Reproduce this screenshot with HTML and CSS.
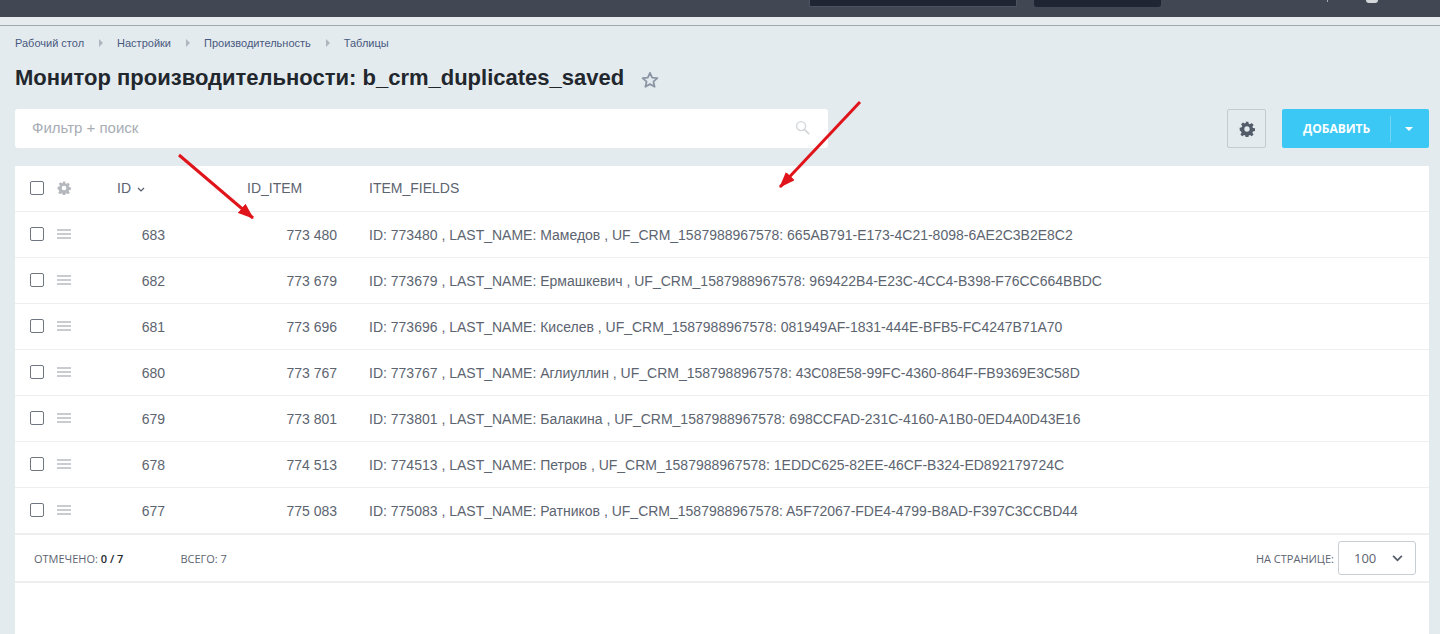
FILE: index.html
```html
<!DOCTYPE html>
<html lang="ru">

<head>
    <meta charset="UTF-8">
    <meta name="viewport" content="width=device-width, initial-scale=1.0">
    <link rel="stylesheet" href="styles.css">
    <title>Монитор производительности</title>
</head>

<body>
    <div class="topbar">
        <div class="topbarBtn topbarBtnWide"></div>
        <div class="topbarBtn topbarBtnNarrow"></div>
        <div class="topbarMark"></div>
        <div class="topbarDot"></div>
    </div>
    <div class="topline"></div>

    <div class="page">
        <div class="breadcrumbs">
            <a>Рабочий стол</a><span class="crumbArrow"></span>
            <a>Настройки</a><span class="crumbArrow"></span>
            <a>Производительность</a><span class="crumbArrow"></span>
            <a>Таблицы</a>
        </div>

        <div class="titleRow">
            <h1>Монитор производительности: b_crm_duplicates_saved</h1>
            <svg class="star" viewBox="0 0 20 20" width="18" height="18">
                <path d="M10 2l2.4 5.3 5.8.6-4.4 3.9 1.3 5.7L10 14.6l-5.1 2.9 1.3-5.7L1.800 7.900l5.800-.6z" fill="none" stroke="#8b95a3" stroke-width="2" stroke-linejoin="round" />
            </svg>
        </div>

        <div class="toolbar">
            <div class="filter">
                <span>Фильтр + поиск</span>
                <svg viewBox="0 0 16 16" width="15" height="15">
                    <circle cx="6.500" cy="6.500" r="4.800" fill="none" stroke="#d3d6da" stroke-width="1.500" />
                    <path d="M10 10l5 5" stroke="#d3d6da" stroke-width="2" />
                </svg>
            </div>
            <div class="gearBtn">
                <svg viewBox="0 0 24 24" width="16" height="16">
                    <path fill="#535c69" fill-rule="evenodd" d="M10 1h4l.6 3.100 1.900.8 2.600-1.800 2.800 2.800-1.800 2.600.8 1.900 3.100.6v4l-3.100.6-.8 1.900 1.800 2.600-2.800 2.800-2.600-1.800-1.900.8-.6 3.100h-4l-.6-3.100-1.900-.8-2.600 1.800-2.800-2.800 1.800-2.600-.8-1.900L1 14v-4l3.100-.6.8-1.900-1.800-2.600 2.800-2.800 2.600 1.800 1.900-.8zM12 8a4 4 0 1 0 0 8 4 4 0 0 0 0-8z" />
                </svg>
            </div>
            <div class="addBtn">
                <span class="addText">ДОБАВИТЬ</span>
                <span class="addArrow"></span>
            </div>
        </div>

        <div class="card">
            <table class="grid">
                <thead>
                    <tr>
                        <th class="colActions">
                            <div class="actions">
                                <span class="check"></span>
                                <svg viewBox="0 0 24 24" width="14" height="14">
                                    <path fill="#b5b9bd" fill-rule="evenodd" d="M10 1h4l.6 3.100 1.900.8 2.600-1.800 2.800 2.800-1.800 2.600.8 1.900 3.100.6v4l-3.100.6-.8 1.900 1.800 2.600-2.800 2.800-2.600-1.800-1.900.8-.6 3.100h-4l-.6-3.100-1.900-.8-2.600 1.800-2.800-2.800 1.800-2.600-.8-1.900L1 14v-4l3.100-.6.8-1.900-1.800-2.600 2.800-2.800 2.600 1.800 1.900-.8zM12 8a4 4 0 1 0 0 8 4 4 0 0 0 0-8z" />
                                </svg>
                            </div>
                        </th>
                        <th class="colId"><span class="thText">ID <svg class="sortMark" viewBox="0 0 8 6" width="8" height="6"><path d="M1 1l3 3 3-3" fill="none" stroke="#535c69" stroke-width="1.200" /></svg></span></th>
                        <th class="colItem"><span class="thText">ID_ITEM</span></th>
                        <th><span class="thText">ITEM_FIELDS</span></th>
                    </tr>
                </thead>
                <tbody id="rows"></tbody>
            </table>

            <div class="footer">
                <span class="marked">ОТМЕЧЕНО: <b>0 / 7</b></span>
                <span class="total">ВСЕГО: 7</span>
                <span class="perPage">НА СТРАНИЦЕ:</span>
                <div class="select">
                    <span>100</span>
                    <svg viewBox="0 0 12 8" width="11" height="7"><path d="M1 1l5 5 5-5" fill="none" stroke="#535c69" stroke-width="2" /></svg>
                </div>
            </div>
        </div>
    </div>

    <!-- red arrows drawn on top of the screenshot -->
    <svg class="arrows" viewBox="0 0 1440 634" width="1440" height="634">
        <defs>
            <marker id="head" markerWidth="16" markerHeight="12" refX="15" refY="6" orient="auto" markerUnits="userSpaceOnUse">
                <path d="M0 0L16 6L0 12z" fill="#e0141b" />
            </marker>
        </defs>
        <path d="M179 155L253 218" stroke="#e0141b" stroke-width="3" marker-end="url(#head)" />
        <path d="M860 102L780 187" stroke="#e0141b" stroke-width="3" marker-end="url(#head)" />
    </svg>

    <script>var rows = [
            ["683", "773 480", "ID: 773480 , LAST_NAME: Мамедов , UF_CRM_1587988967578: 665AB791-E173-4C21-8098-6AE2C3B2E8C2"],
            ["682", "773 679", "ID: 773679 , LAST_NAME: Ермашкевич , UF_CRM_1587988967578: 969422B4-E23C-4CC4-B398-F76CC664BBDC"],
            ["681", "773 696", "ID: 773696 , LAST_NAME: Киселев , UF_CRM_1587988967578: 081949AF-1831-444E-BFB5-FC4247B71A70"],
            ["680", "773 767", "ID: 773767 , LAST_NAME: Аглиуллин , UF_CRM_1587988967578: 43C08E58-99FC-4360-864F-FB9369E3C58D"],
            ["679", "773 801", "ID: 773801 , LAST_NAME: Балакина , UF_CRM_1587988967578: 698CCFAD-231C-4160-A1B0-0ED4A0D43E16"],
            ["678", "774 513", "ID: 774513 , LAST_NAME: Петров , UF_CRM_1587988967578: 1EDDC625-82EE-46CF-B324-ED892179724C"],
            ["677", "775 083", "ID: 775083 , LAST_NAME: Ратников , UF_CRM_1587988967578: A5F72067-FDE4-4799-B8AD-F397C3CCBD44"]
        ];

        document.getElementById("rows").innerHTML = rows.map(item => (
            "<tr><td class='colActions'><div class='actions'><span class='check'></span><span class='drag'></span></div></td>" +
            "<td class='colId'>" + item[0] + "</td>" +
            "<td class='colItem'>" + item[1] + "</td>" +
            "<td>" + item[2] + "</td></tr>"
        )).join('');</script>
</body>

</html>
```

FILE: styles.css
```css
html,
body {
    margin: 0;
    height: 634px;
    overflow: hidden;
}

body {
    position: relative;
    background-color: #e4ebee;
    font-family: "Liberation Sans", Arial, sans-serif;
    color: #5c6470;
}

.topbar {
    display: flex;
    height: 17px;
    background-color: #414854;
    align-items: flex-start;
    padding-left: 809px;
    box-sizing: border-box;
}

.topbarBtn {
    height: 7px;
    background-color: #1f2532;
}

.topbarBtnWide {
    width: 208px;
    border: 1px solid #4c5360;
    border-top: 0;
    box-sizing: border-box;
}

.topbarBtnNarrow {
    width: 127px;
    margin-left: 17px;
    border-radius: 0 0 3px 3px;
}

.topbarMark {
    width: 1px;
    height: 2px;
    margin-left: 166px;
    background-color: #a4a8ae;
}

.topbarDot {
    width: 12px;
    height: 3px;
    margin-left: 38px;
    border-radius: 0 0 6px 6px;
    background-color: #d5d8db;
}

.topline {
    height: 8px;
    border-bottom: 1px solid #9fa8ac;
    background-color: #e6eced;
}

.page {
    padding: 0 11px 0 15px;
}

.breadcrumbs {
    display: flex;
    align-items: center;
    height: 14px;
    margin-top: 10px;
    font-size: 11px;
    color: #48597e;
}

.crumbArrow {
    width: 0;
    height: 0;
    margin: 0 14px 0 15px;
    border-left: 4px solid #b0b6bd;
    border-top: 4px solid transparent;
    border-bottom: 4px solid transparent;
}

.titleRow {
    display: flex;
    align-items: center;
    height: 32px;
    margin-top: 12px;
}

h1 {
    margin: 0;
    font-size: 22px;
    font-weight: bold;
    color: #22272e;
}

.star {
    margin-left: 17px;
    margin-top: 3px;
}

.toolbar {
    display: flex;
    align-items: center;
    margin-top: 15px;
}

.filter {
    display: flex;
    width: 813px;
    height: 39px;
    padding: 0 18px 2px 17px;
    box-sizing: border-box;
    align-items: center;
    justify-content: space-between;
    border-radius: 3px;
    background-color: #fff;
    font-size: 15px;
    color: #a8adb4;
}

.gearBtn {
    display: flex;
    width: 39px;
    height: 39px;
    margin-left: 399px;
    box-sizing: border-box;
    align-items: center;
    justify-content: center;
    border: 1px solid #c3cbd0;
    border-radius: 2px;
}

.addBtn {
    display: flex;
    width: 147px;
    height: 39px;
    margin-left: 16px;
    align-items: center;
    border-radius: 2px;
    background-color: #3bc8f5;
    color: #fff;
    font-family: "Open Sans", sans-serif;
    font-size: 12px;
    font-weight: bold;
}

.addText {
    display: flex;
    width: 109px;
    height: 26px;
    box-sizing: border-box;
    padding-left: 21px;
    align-items: center;
    border-right: 1px solid #6fd6f8;
}

.addArrow {
    width: 0;
    height: 0;
    margin-left: 14px;
    border-top: 4px solid #fff;
    border-left: 4px solid transparent;
    border-right: 4px solid transparent;
}

.card {
    height: 468px;
    margin-top: 18px;
    background-color: #fff;
}

.grid {
    width: 100%;
    table-layout: fixed;
    border-collapse: separate;
    border-spacing: 0;
    font-size: 14px;
}

.grid th,
.grid td {
    height: 45px;
    padding: 0;
    border-bottom: 1px solid #eceef0;
    text-align: left;
    font-weight: normal;
    color: #5c6470;
}

.grid tbody tr:last-child td {
    border-bottom: 2px solid #eceef0;
}

.thText {
    position: relative;
    top: -1px;
}

th.colId .thText {
    padding-left: 1px;
}

.sortMark {
    margin-left: 2px;
}

.colActions {
    width: 101px;
}

.colId {
    width: 131px;
}

.grid td.colId {
    padding-right: 82px;
    text-align: right;
}

.grid td.colItem {
    padding-right: 32px;
    text-align: right;
}

.colItem {
    width: 122px;
}

.actions {
    display: flex;
    align-items: center;
    padding-left: 15px;
    padding-bottom: 1px;
}

.check {
    display: block;
    width: 14px;
    height: 14px;
    border: 1px solid #6e7680;
    border-radius: 2px;
    box-sizing: border-box;
    margin-right: 13px;
}

.drag {
    display: block;
    width: 14px;
    height: 10px;
    border-top: 2px solid #c9ccd0;
    border-bottom: 2px solid #c9ccd0;
    box-sizing: border-box;
    background: linear-gradient(#c9ccd0, #c9ccd0) center / 100% 2px no-repeat;
}

.footer {
    display: flex;
    align-items: center;
    height: 45px;
    padding: 1px 13px 0 19px;
    border-bottom: 2px solid #eceef0;
    font-family: "Open Sans", sans-serif;
    font-size: 11px;
    color: #5c6470;
}

.marked b {
    font-weight: 600;
    color: #22272e;
}

.total {
    margin-left: 57px;
}

.perPage {
    margin-left: auto;
    margin-right: 4px;
}

.select {
    display: flex;
    width: 78px;
    height: 34px;
    margin-bottom: 1px;
    padding: 0 12px 0 15px;
    box-sizing: border-box;
    align-items: center;
    justify-content: space-between;
    border: 1px solid #c6cdd3;
    border-radius: 3px;
    font-size: 13px;
}

.arrows {
    position: absolute;
    top: 0;
    left: 0;
    pointer-events: none;
}
```
